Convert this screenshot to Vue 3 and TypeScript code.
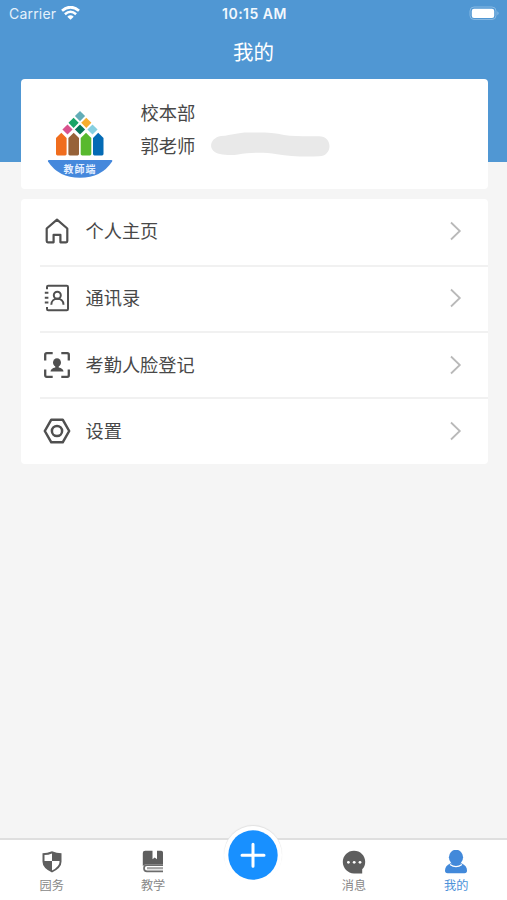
<script setup lang="ts">
interface MenuItem {
  icon: 'home' | 'contacts' | 'face' | 'settings'
  label: string
}

interface TabItem {
  icon: 'shield' | 'book' | 'plus' | 'chat' | 'user'
  label: string
  active?: boolean
}

const menu: MenuItem[] = [
  { icon: 'home', label: '个人主页' },
  { icon: 'contacts', label: '通讯录' },
  { icon: 'face', label: '考勤人脸登记' },
  { icon: 'settings', label: '设置' },
]

const tabs: TabItem[] = [
  { icon: 'shield', label: '园务' },
  { icon: 'book', label: '教学' },
  { icon: 'plus', label: '' },
  { icon: 'chat', label: '消息' },
  { icon: 'user', label: '我的', active: true },
]
</script>

<template>
  <div class="screen">
    <header class="header">
      <div class="status">
        <div class="carrier">
          <span>Carrier</span>
          <svg class="wifi" width="19" height="14" viewBox="0 0 19 14" fill="none">
            <path d="M1 4.800Q9.500-2.400 18 4.800" stroke="#fff" stroke-width="2.800" />
            <path d="M3.900 8.200Q9.500 3.200 15.100 8.200" stroke="#fff" stroke-width="2.500" />
            <path d="M6.300 10.700Q9.500 7.800 12.700 10.700L9.500 13.800Z" fill="#fff" />
          </svg>
        </div>
        <span class="time">10:15 AM</span>
        <div class="power">
          <svg width="31" height="15" viewBox="0 0 31 15" fill="none">
            <rect x="1" y="1" width="26" height="12.500" rx="4" stroke="#86b8e2" />
            <rect x="2.800" y="2.700" width="22.400" height="9.200" rx="2.200" fill="#fff" />
            <path d="M28.500 5.300Q30.500 7.200 28.500 9.200Z" fill="#9bc5e9" />
          </svg>
        </div>
      </div>
      <h1 class="title">我的</h1>
    </header>

    <main class="content">
      <section class="card profile">
        <div class="logo">
          <svg width="66" height="68" viewBox="0 0 66 68">
            <path d="M33 0l5.100 5.100-5.100 5.100-5.100-5.100z" fill="#62adb7" />
            <path d="M26.600 6.700l5.100 5.100-5.100 5.100-5.100-5.100z" fill="#19a567" />
            <path d="M39.300 6.700l5.100 5.100-5.100 5.100-5.100-5.100z" fill="#f6ae2d" />
            <path d="M20.500 13.400l5.100 5.100-5.100 5.100-5.100-5.100z" fill="#d9528d" />
            <path d="M33 13.400l5.100 5.100-5.100 5.100-5.100-5.100z" fill="#08765a" />
            <path d="M45.500 13.400l5.100 5.100-5.100 5.100-5.100-5.100z" fill="#87d0e0" />
            <path d="M9 27l5.300-5.300L19.600 27v16q0 1.400-1.400 1.400h-7.800Q9 44.400 9 43z" fill="#f06d1d" />
            <path d="M21.400 27l5.300-5.300L32 27v16q0 1.400-1.400 1.400h-7.800q-1.400 0-1.400-1.400z" fill="#976238" />
            <path d="M33.700 27l5.300-5.300 5.300 5.300v16q0 1.400-1.400 1.400h-7.800q-1.400 0-1.400-1.400z" fill="#58b92e" />
            <path d="M46 27l5.200-5.300 5.300 5.300v16q0 1.400-1.400 1.400h-7.700Q46 44.400 46 43z" fill="#046bb5" />
            <path d="M2 49h62.500q1.500 0 .6 1.500Q54.500 66.800 33 66.800T1 50.500Q.2 49 2 49z" fill="#4588dc" />
          </svg>
          <span class="logo-text">教師端</span>
        </div>
        <div class="identity">
          <div>校本部</div>
          <div class="person">
            <span>郭老师</span>
            <svg width="119" height="25" viewBox="0 0 119 25">
              <path d="M10 4C22 3 25 .4 38 .4C52 .4 63 0 73 3C82 4.500 94 4.300 108 4.300C122 4.300 122 24 108 24.300C91 25 78 24 66 22.200C52 20 39 20.500 27 22.500C21 23.500 14 23 9 22C-4 19.500-2 6 10 4Z" fill="#e9e9e9" />
            </svg>
          </div>
        </div>
      </section>

      <nav class="card menu">
        <a v-for="item in menu" :key="item.label" class="row">
          <svg class="row-icon" width="28" height="28" viewBox="0 0 28 28" fill="none" stroke="#505050" stroke-width="2" stroke-linejoin="round">
            <path v-if="item.icon === 'home'" d="M3.700 11.500L14 2.700l10.300 8.800v12.600q0 1.200-1.200 1.200h-5.700v-7.500h-6.800v7.500H4.900q-1.200 0-1.200-1.200z" stroke-width="2.200" />
            <template v-else-if="item.icon === 'contacts'">
              <path d="M4 5.300V3q0-1.200 1.200-1.200h18.600q1.200 0 1.200 1.200v22q0 1.200-1.200 1.200H5.200Q4 26.200 4 25v-2M1.800 8.800h3.600M1.800 13.700h3.600M1.800 18.600h3.600" />
              <circle cx="14.300" cy="11.200" r="3.500" />
              <path d="M8.300 20.700c0-3.600 2.600-6 6-6s6.200 2.400 6.200 6" />
            </template>
            <template v-else-if="item.icon === 'face'">
              <path d="M2.200 9.500V3.700q0-1.500 1.500-1.500h6M18.300 2.200h6q1.500 0 1.500 1.500v5.800M25.800 18.500v5.800q0 1.500-1.500 1.500h-6M9.700 25.800h-6q-1.500 0-1.500-1.500v-5.800" stroke-width="2.300" />
              <ellipse cx="14" cy="11.500" rx="4" ry="4.300" fill="#505050" stroke="none" />
              <path d="M12.300 14h3.400v2.500q4.500.8 4.800 4H7.500q.3-3.200 4.800-4z" fill="#505050" stroke="none" />
            </template>
            <template v-else>
              <path d="M8.300 2.700h11.400L26.200 14l-6.500 11.300H8.300L1.800 14z" stroke-width="2.500" />
              <circle cx="14" cy="14" r="5.100" stroke-width="2.500" />
            </template>
          </svg>
          <span class="row-label">{{ item.label }}</span>
          <svg width="12" height="20" viewBox="0 0 12 20" fill="none">
            <path d="M1 1.500l8.800 8.500L1 18.500" stroke="#b9b9b9" stroke-width="1.800" />
          </svg>
        </a>
      </nav>
    </main>

    <footer class="tabbar">
      <div v-for="tab in tabs" :key="tab.icon" class="tab" :class="{ active: tab.active, add: tab.icon === 'plus' }">
        <div v-if="tab.icon === 'plus'" class="add-ring">
          <svg width="50" height="50" viewBox="0 0 50 50">
            <circle cx="25" cy="25" r="24.700" fill="#1890ff" />
            <path d="M25 14.200v22M14 25.200h22" stroke="#fff" stroke-width="3" stroke-linecap="round" />
          </svg>
        </div>
        <template v-else>
          <svg width="24" height="24" viewBox="0 0 24 24">
            <template v-if="tab.icon === 'shield'">
              <path d="M12 1.200q4.600 2 9.500 2v8.600q0 6.200-9.500 10.700Q2.500 18 2.500 11.800V3.200q4.900 0 9.500-2z" fill="#5e5e5e" />
              <path d="M12 3.400V11H4.500V5q4 0 7.500-1.600zM12 11h7.500v1q0 4.800-7.500 8.400z" fill="#fff" />
            </template>
            <template v-else-if="tab.icon === 'book'">
              <path d="M4.200.8h7.300v8.400l2.200-1.700 2.300 1.700V.8h4.200q1.800 0 1.800 1.700v11.700H6q-2.500 0-4.200 1.800V3Q1.800.8 4.200.8z" fill="#5e5e5e" />
              <path d="M22 15.200H6q-3 0-3 3t3 3.200h16" fill="none" stroke="#6c6c6c" stroke-width="1.700" />
              <path d="M6 18.200h16" stroke="#a5a5a5" stroke-width="2.200" />
            </template>
            <template v-else-if="tab.icon === 'chat'">
              <path d="M12 .8c6.300 0 11.200 4.800 11.200 11 0 3-1 5.500-3 7.500v4.100H12C5.700 23.400.8 18 .8 12 .8 5.700 5.700.8 12 .8z" fill="#5e5e5e" />
              <g fill="#fff"><circle cx="6.400" cy="12.300" r="1.400" /><circle cx="12.200" cy="12.300" r="1.400" /><circle cx="18" cy="12.300" r="1.400" /></g>
            </template>
            <template v-else>
              <path d="M6.500 13.200Q1 15.700 1 20.500q0 2.700 2.500 2.700h17q2.500 0 2.500-2.700 0-4.800-5.500-7.300z" fill="#4289da" />
              <path d="M6 14.500q6 4.200 12 0" fill="none" stroke="#fff" stroke-width="1.300" />
              <ellipse cx="12" cy="7.300" rx="7.100" ry="7.600" fill="#4289da" />
            </template>
          </svg>
          <span class="tab-label">{{ tab.label }}</span>
        </template>
      </div>
    </footer>
  </div>
</template>

<style>
body {
  margin: 0;
}
</style>

<style scoped>
.screen {
  display: flex;
  flex-direction: column;
  width: 100%;
  height: 900px;
  overflow: hidden;
  background: #f5f5f5;
  color: #484848;
  font-family: Inter, "Noto Sans CJK SC", sans-serif;
}

.header {
  flex: none;
  height: 162px;
  background: #5097d3;
  color: #fff;
}

.status {
  display: grid;
  grid-template-columns: 1fr auto 1fr;
  align-items: center;
  height: 28px;
  padding: 0 7px 0 9px;
  font-size: 14px;
}

.carrier {
  display: flex;
  align-items: center;
  gap: 5px;
  color: #e5f1fb;
  letter-spacing: 0.200px;
}

.carrier span {
  margin-top: -1px;
}

.wifi {
  margin-top: -3px;
}

.time {
  margin-top: -1px;
  font-size: 14px;
  font-weight: 600;
  letter-spacing: 0.500px;
  color: #f2f8fd;
}

.power {
  display: flex;
  justify-content: flex-end;
  margin-top: -1px;
}

.title {
  margin: 8.500px 0 0;
  font-size: 20.500px;
  font-weight: 400;
  line-height: 32px;
  text-align: center;
}

.content {
  display: flex;
  flex: 1;
  flex-direction: column;
  gap: 10px;
  margin-top: -83px;
  padding: 0 19.500px 0 20.500px;
}

.card {
  border-radius: 4px;
  background: #fff;
}

.profile {
  display: flex;
  height: 110px;
}

.logo {
  position: relative;
  width: 66px;
  height: 68px;
  margin: 32px 0 0 26.500px;
}

.logo-text {
  position: absolute;
  top: 52px;
  left: 0;
  width: 100%;
  color: #e4efff;
  font-size: 10px;
  font-weight: 700;
  letter-spacing: 1px;
  line-height: 12px;
  text-align: center;
}

.identity {
  margin: 18px 0 0 27.500px;
  font-size: 18.300px;
  line-height: 33px;
}

.person {
  display: flex;
  align-items: center;
  gap: 16px;
}

.person svg {
  margin-top: -4px;
}

.row {
  display: flex;
  align-items: center;
  height: 65.500px;
  box-sizing: border-box;
  margin-left: 19.500px;
  padding: 0 26px 1px 3px;
}

.row + .row {
  height: 66.400px;
  border-top: 2px solid #f1f1f1;
}

.row-label {
  flex: 1;
  margin-left: 14.500px;
  font-size: 18.200px;
  line-height: 28px;
}

.tabbar {
  display: grid;
  grid-template-columns: repeat(5, 1fr);
  flex: none;
  box-sizing: border-box;
  height: 62px;
  border-top: 2px solid #dfdfdf;
  background: #fff;
}

.tab {
  display: flex;
  flex-direction: column;
  align-items: center;
  padding-top: 10px;
  color: #888;
}

.tab:nth-child(-n + 2) {
  padding-left: 2px;
}

.tab:nth-child(4) {
  padding-right: 2px;
}

.tab-label {
  margin-top: 3px;
  font-size: 12.200px;
  line-height: 18px;
}

.tab.active {
  color: #4c91d9;
}

.tab.add {
  padding-top: 0;
}

.add-ring {
  display: flex;
  box-sizing: border-box;
  margin-top: -14px;
  padding: 4px;
  border-radius: 50%;
  background: #fff;
  box-shadow: 0 -1px 1px #e1e1e1;
}
</style>
